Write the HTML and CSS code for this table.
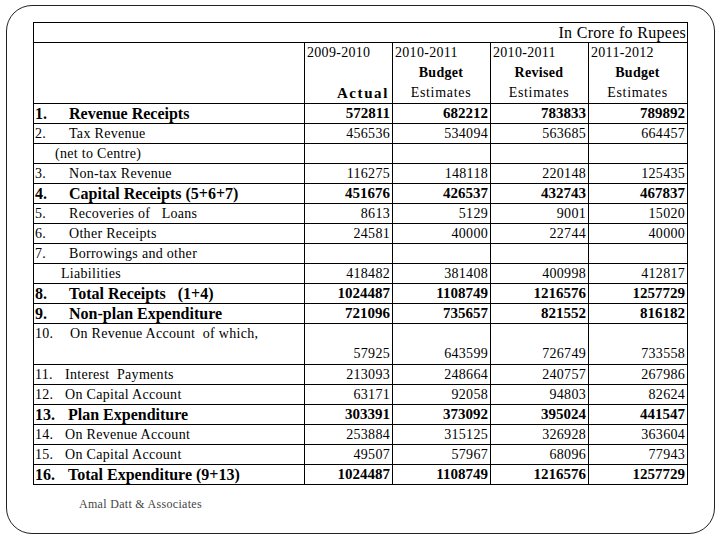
FILE: index.html
```html
<!DOCTYPE html>
<html>
<head>
<meta charset="utf-8">
<link rel="stylesheet" href="styles.css">
</head>
<body>
<div class="frame">
  <table class="budget">
    <colgroup>
      <col class="c-lbl"><col class="c-a"><col class="c-b"><col class="c-b"><col class="c-c">
    </colgroup>
    <tr class="title"><td colspan="5">In Crore fo Rupees</td></tr>
    <tr class="head">
      <td></td>
      <td><div class="yr">2009-2010</div><div class="hl"></div><div class="hl r b sp">Actual</div></td>
      <td><div class="yr">2010-2011</div><div class="hl c b">Budget</div><div class="hl c est">Estimates</div></td>
      <td><div class="yr">2010-2011</div><div class="hl c b">Revised</div><div class="hl c est">Estimates</div></td>
      <td><div class="yr">2011-2012</div><div class="hl c b">Budget</div><div class="hl c est">Estimates</div></td>
    </tr>
    <tr class="bold"><td class="lbl"><span class="n">1.</span>Revenue Receipts</td><td>572811</td><td>682212</td><td>783833</td><td>789892</td></tr>
    <tr><td class="lbl"><span class="n">2.</span>Tax Revenue</td><td>456536</td><td>534094</td><td>563685</td><td>664457</td></tr>
    <tr><td class="lbl sub1">(net to Centre)</td><td></td><td></td><td></td><td></td></tr>
    <tr><td class="lbl"><span class="n">3.</span>Non-tax Revenue</td><td>116275</td><td>148118</td><td>220148</td><td>125435</td></tr>
    <tr class="bold"><td class="lbl"><span class="n">4.</span>Capital Receipts (5+6+7)</td><td>451676</td><td>426537</td><td>432743</td><td>467837</td></tr>
    <tr><td class="lbl"><span class="n">5.</span>Recoveries of &nbsp; Loans</td><td>8613</td><td>5129</td><td>9001</td><td>15020</td></tr>
    <tr><td class="lbl"><span class="n">6.</span>Other Receipts</td><td>24581</td><td>40000</td><td>22744</td><td>40000</td></tr>
    <tr><td class="lbl"><span class="n">7.</span>Borrowings and other</td><td></td><td></td><td></td><td></td></tr>
    <tr><td class="lbl sub2">Liabilities</td><td>418482</td><td>381408</td><td>400998</td><td>412817</td></tr>
    <tr class="bold"><td class="lbl"><span class="n">8.</span>Total Receipts &nbsp; (1+4)</td><td>1024487</td><td>1108749</td><td>1216576</td><td>1257729</td></tr>
    <tr class="bold"><td class="lbl"><span class="n">9.</span>Non-plan Expenditure</td><td>721096</td><td>735657</td><td>821552</td><td>816182</td></tr>
    <tr class="tall"><td class="lbl top"><span class="n">10.</span>On Revenue Account &nbsp;of which,</td><td>57925</td><td>643599</td><td>726749</td><td>733558</td></tr>
    <tr><td class="lbl"><span class="n n2">11.</span>Interest &nbsp;Payments</td><td>213093</td><td>248664</td><td>240757</td><td>267986</td></tr>
    <tr><td class="lbl"><span class="n n2">12.</span>On Capital Account</td><td>63171</td><td>92058</td><td>94803</td><td>82624</td></tr>
    <tr class="bold"><td class="lbl"><span class="n n3">13.</span>Plan Expenditure</td><td>303391</td><td>373092</td><td>395024</td><td>441547</td></tr>
    <tr><td class="lbl"><span class="n n2">14.</span>On Revenue Account</td><td>253884</td><td>315125</td><td>326928</td><td>363604</td></tr>
    <tr><td class="lbl"><span class="n n2">15.</span>On Capital Account</td><td>49507</td><td>57967</td><td>68096</td><td>77943</td></tr>
    <tr class="bold"><td class="lbl"><span class="n n3">16.</span>Total Expenditure (9+13)</td><td>1024487</td><td>1108749</td><td>1216576</td><td>1257729</td></tr>
  </table>
  <div class="footer">Amal Datt &amp; Associates</div>
</div>
</body>
</html>
```

FILE: styles.css
```css
html, body {
  margin: 0;
  padding: 0;
  background: #fff;
}
body {
  font-family: "Liberation Serif", "Times New Roman", serif;
  color: #000;
}
.frame {
  box-sizing: border-box;
  margin: 5px 0 0 6px;
  width: 709px;
  height: 529px;
  border: 1px solid #222;
  border-radius: 26px;
  padding: 16px 0 0 26px;
}
.budget {
  border-collapse: collapse;
  table-layout: fixed;
  width: 655px;
}
.c-lbl { width: 271px; }
.c-a { width: 88px; }
.c-b { width: 98px; }
.c-c { width: 99px; }
.budget td {
  border: 1px solid #000;
  padding: 0 2px 0 0;
  height: 19px;
  line-height: 19px;
  font-size: 14px;
  letter-spacing: 0.3px;
  text-align: right;
  vertical-align: middle;
  white-space: nowrap;
}
.title td {
  font-size: 16px;
  letter-spacing: 0.3px;
  padding-right: 1px;
}
.head td {
  height: 60px;
  vertical-align: top;
  padding: 0 3px 0 2px;
}
.yr, .hl {
  height: 20px;
  line-height: 20px;
}
.yr { text-align: left; }
.hl.c { text-align: center; }
.hl.r { text-align: right; }
.b { font-weight: bold; }
.sp {
  font-size: 15px;
  letter-spacing: 1.6px;
}
.est { letter-spacing: 0.7px; }
.budget td.lbl {
  text-align: left;
  padding-left: 1px;
}
.n {
  display: inline-block;
  width: 34px;
}
.n2 { width: 30px; }
.n3 { width: 33px; }
.sub1 { padding-left: 21px !important; }
.sub2 { padding-left: 27px !important; }
.bold td {
  font-weight: bold;
  font-size: 15px;
  letter-spacing: 0;
}
.bold td.lbl {
  font-size: 16px;
}
.tall td {
  height: 40px;
  vertical-align: bottom;
  line-height: 20px;
}
.tall td.top {
  vertical-align: top;
  padding-left: 1px;
}
.tall .n { width: 35px; }
.footer {
  margin: 12px 0 0 46px;
  font-size: 12px;
  color: #444;
  letter-spacing: 0.3px;
}
```
